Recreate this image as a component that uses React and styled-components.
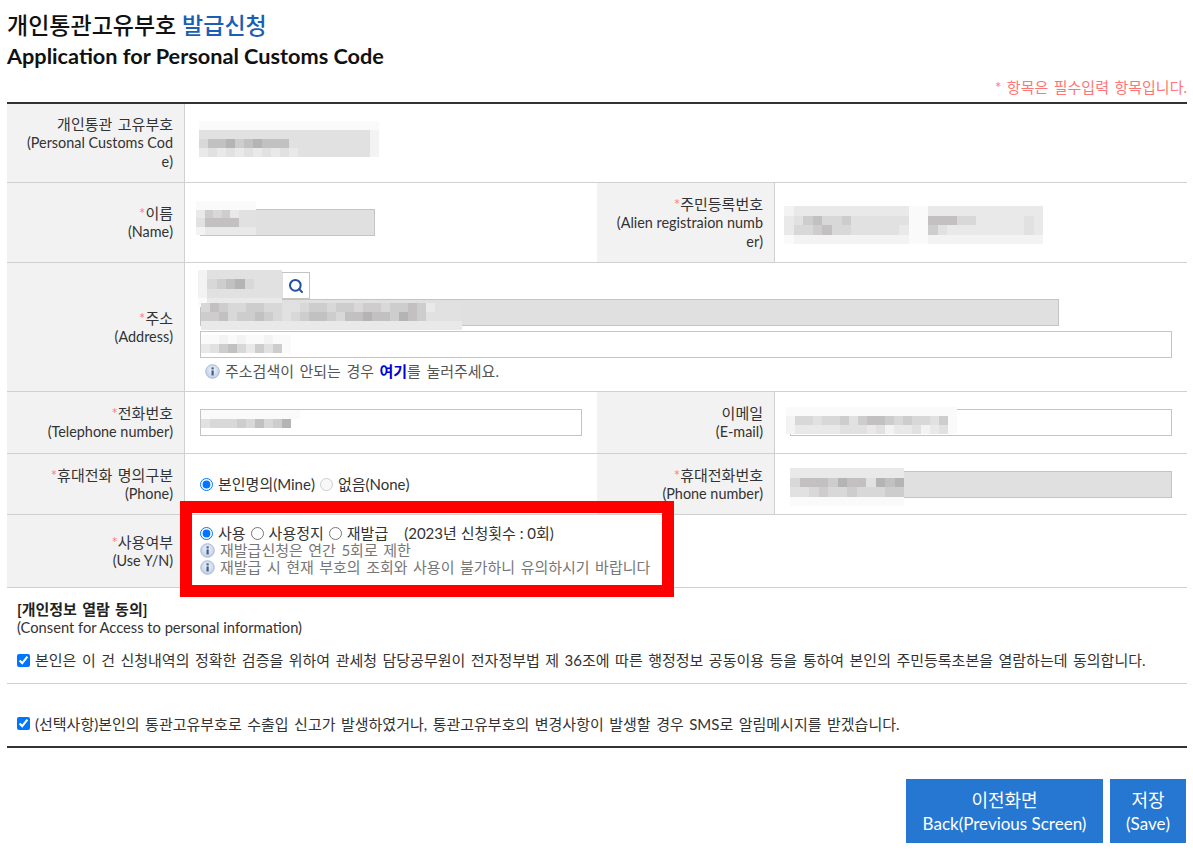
import React from "react";
import styled, { createGlobalStyle } from "styled-components";
import { Search } from "lucide-react";

const GlobalStyle = createGlobalStyle`
  html, body {
    margin: 0;
    padding: 0;
    background: #fff;
  }
  body {
    font-family: Lato, "Noto Sans CJK KR", sans-serif;
    font-size: 15px;
    line-height: 18px;
    word-spacing: 1.65px;
    color: #222;
  }
`;

const Page = styled.div`
  width: 1180px;
  margin-left: 7px;
  position: relative;
`;

const Title = styled.h1`
  margin: 0;
  padding-top: 10px;
  font-size: 23px;
  line-height: 30px;
  font-weight: 500;
  word-spacing: 0;
  color: #111;
`;

const TitleAccent = styled.span`
  color: #1a5fb4;
`;

const TitleEnglish = styled.span`
  font-size: 21.7px;
  font-weight: 700;
`;

const Required = styled.div`
  height: 31px;
  padding-top: 1px;
  box-sizing: border-box;
  text-align: right;
  line-height: 30px;
  color: #ff7575;
`;

const Table = styled.table`
  width: 1180px;
  table-layout: fixed;
  border-collapse: separate;
  border-spacing: 0;
  border-top: 2px solid #333;
`;

const Row = styled.tr`
  height: ${props => props.$height}px;
`;

const Head = styled.th`
  width: 177px;
  box-sizing: border-box;
  padding: 0 11px 0 0;
  background: #f2f2f2;
  border-right: 1px solid #d0d0d0;
  border-bottom: 1px solid #d0d0d0;
  text-align: right;
  font-weight: 400;
  color: #333;
`;

const EnglishLine = styled.span`
  font-size: 14.4px;
  word-spacing: 0;
`;

const Cell = styled.td`
  padding: 0 15px ${props => props.$bottom || 0}px;
  border-bottom: 1px solid #d0d0d0;
  position: relative;
  vertical-align: middle;
`;

const Star = styled.span`
  color: #ff7f7f;
`;

const Field = styled.div`
  display: block;
  height: 27px;
  width: ${props => props.$width || 382}px;
  box-sizing: border-box;
  border: 1px solid #c4c4c4;
  background: ${props => (props.$readOnly ? "#e0e0e0" : "#fff")};
`;

const SearchBox = styled(Field)`
  display: flex;
  justify-content: flex-end;
  background: #e0e0e0;
`;

const SearchButton = styled.button`
  width: 26px;
  padding: 0;
  border: 0;
  background: #fff;
  color: #22519f;
  display: flex;
  align-items: center;
  justify-content: center;
`;

const AddressStack = styled.div`
  display: flex;
  flex-direction: column;
  padding-bottom: 2px;
`;

const DetailField = styled(Field)`
  margin-top: 5px;
`;

const Hint = styled.div`
  margin-top: 4px;
  margin-left: 5px;
  height: 18px;
  display: flex;
  align-items: center;
  gap: 5px;
  color: #555;
`;

const HereLink = styled.a`
  color: #0000d8;
  font-weight: 700;
`;

const Choices = styled.div`
  display: flex;
  align-items: center;
  height: 17px;
  color: #333;
`;

const Radio = styled.input.attrs({ type: "radio" })`
  width: 13px;
  height: 13px;
  margin: 0 5px 0 0;
  flex-shrink: 0;
`;

const ChoiceText = styled.span`
  margin-right: ${props => props.$gap ?? 5}px;
`;

const IssueCount = styled.span`
  word-spacing: 0;
`;

const Note = styled.div`
  display: flex;
  align-items: center;
  gap: 5px;
  height: 17px;
  color: #777;
`;

const Overlay = styled.div`
  position: absolute;
  left: 173px;
  top: 501px;
  width: 494px;
  height: 96px;
  box-sizing: border-box;
  border: 12px solid #f00;
  pointer-events: none;
`;

const Patch = styled.svg`
  position: absolute;
  left: ${props => props.$left}px;
  top: ${props => props.$top}px;
  display: block;
`;

const Consent = styled.section`
  padding-top: 12px;
`;

const ConsentTitle = styled.div`
  padding-left: 10px;
  font-weight: 700;
  color: #222;
`;

const ConsentSub = styled.div`
  padding-left: 10px;
  font-size: 14.7px;
  word-spacing: 0;
  color: #333;
`;

const Agree = styled.label`
  display: flex;
  align-items: center;
  height: ${props => props.$height}px;
  padding: ${props => props.$padding};
  box-sizing: border-box;
  border-bottom: ${props => props.$border};
  color: #333;
`;

const Check = styled.input.attrs({ type: "checkbox" })`
  width: 13px;
  height: 13px;
  margin: 0 5px 0 0;
  flex-shrink: 0;
`;

const Buttons = styled.div`
  display: flex;
  justify-content: flex-end;
  gap: 7px;
  padding: 31px 1px 0 0;
`;

const Button = styled.button`
  width: ${props => props.$width}px;
  height: 64px;
  padding: 2px 0 0;
  border: 0;
  background: #2577d1;
  color: #fff;
  font: inherit;
  font-size: 18px;
  line-height: 23px;
  word-spacing: 0;
`;

const ButtonEnglish = styled.span`
  font-size: 17px;
`;

const shades = {
  a: "#fafafa",
  b: "#f3f3f3",
  c: "#e9e9e9",
  d: "#e1e1e1",
  e: "#d8d8d8",
  f: "#cdcdcd",
  g: "#c2c0c0",
  h: "#b4b4b4",
  w: "#ffffff"
};

// blurred-out personal data, one letter per mosaic block
const Mosaic = ({ left, top, rows, cell = 9 }) => (
  <Patch
    $left={left}
    $top={top}
    width={rows[0].length * cell}
    height={rows.length * cell}
    shapeRendering="crispEdges"
  >
    {rows.map((row, y) =>
      row
        .split("")
        .map((c, x) => (
          <rect
            key={`${x}-${y}`}
            x={x * cell}
            y={y * cell}
            width={cell}
            height={cell}
            fill={shades[c]}
          />
        ))
    )}
  </Patch>
);

const InfoIcon = () => (
  <svg width="15" height="15" viewBox="0 0 15 15">
    <defs>
      <radialGradient id="infoFill" cx="50%" cy="40%" r="60%">
        <stop offset="0%" stopColor="#f0f4fb" />
        <stop offset="100%" stopColor="#bccde8" />
      </radialGradient>
    </defs>
    <circle cx="7.5" cy="7.5" r="6.8" fill="url(#infoFill)" stroke="#a9bbd8" />
    <rect x="6.5" y="3.4" width="2.2" height="2" fill="#4a5a78" />
    <rect x="6.5" y="6.4" width="2.2" height="5" fill="#4a5a78" />
  </svg>
);

const Label = ({ required, ko, en }) => (
  <Head>
    {required && <Star>*</Star>}
    {ko}
    {en.map(line => (
      <React.Fragment key={line}>
        <br />
        <EnglishLine>{line}</EnglishLine>
      </React.Fragment>
    ))}
  </Head>
);

const App = () => (
  <>
    <GlobalStyle />
    <Page>
      <Title>
        개인통관고유부호 <TitleAccent>발급신청</TitleAccent>
        <br />
        <TitleEnglish>Application for Personal Customs Code</TitleEnglish>
      </Title>
      <Required>* 항목은 필수입력 항목입니다.</Required>
      <Table>
        <colgroup>
          <col width="178" />
          <col width="412" />
          <col width="178" />
          <col width="412" />
        </colgroup>
        <tbody>
          <Row $height={79}>
            <Label ko="개인통관 고유부호" en={["(Personal Customs Cod", "e)"]} />
            <Cell colSpan={3}>
              <Mosaic
                left={14}
                top={17}
                rows={[
                  "aaaaaaaaaaaaaaaaaaaa",
                  "dddddddddddddddddddb",
                  "egghfghgggdddddddddb",
                  "cdcdcdcdcdcddddddddb"
                ]}
              />
            </Cell>
          </Row>
          <Row $height={80}>
            <Label required ko="이름" en={["(Name)"]} />
            <Cell>
              <Field $readOnly $width={175} />
              <Mosaic
                left={11}
                top={18}
                rows={["aaaaaaa", "cfefcdd", "dggggdd", "bcccccc"]}
                cell={8.6}
              />
            </Cell>
            <Label required ko="주민등록번호" en={["(Alien registraion numb", "er)"]} />
            <Cell>
              <Mosaic
                left={9}
                top={23}
                rows={[
                  "bccccccccccccaacccccccccccc",
                  "cdfgeefddddddaagggeecccccdc",
                  "ceefgeedddddcaafdccccccccdc",
                  "abbbbbbbbbbbbaabbbbbbbbbbbb"
                ]}
                cell={9.6}
              />
            </Cell>
          </Row>
          <Row $height={129}>
            <Label required ko="주소" en={["(Address)"]} />
            <Cell colSpan={3}>
              <AddressStack>
                <SearchBox $width={110}>
                  <SearchButton>
                    <Search size={16} strokeWidth={3} />
                  </SearchButton>
                </SearchBox>
                <Field $readOnly $width={859} />
                <DetailField $width={972} />
                <Hint>
                  <InfoIcon />
                  <span>
                    주소검색이 안되는 경우 <HereLink>여기</HereLink>를 눌러주세요.
                  </span>
                </Hint>
              </AddressStack>
              <Mosaic
                left={13}
                top={7}
                rows={["bdddddddd", "befgheddd", "bdddddddd", "acccccccc"]}
                cell={9.3}
              />
              <Mosaic
                left={16}
                top={40}
                rows={[
                  "egfeeffeeddeffeffeffeffgfcddd",
                  "ffgeffgfedefggfegghggfhgfdddd",
                  "ccccccccccccccccccccccccccccc"
                ]}
              />
              <Mosaic left={16} top={72} rows={["aababaabaa", "cdfgecfdfa"]} />
            </Cell>
          </Row>
          <Row $height={62}>
            <Label required ko="전화번호" en={["(Telephone number)"]} />
            <Cell>
              <Field />
              <Mosaic left={16} top={18} rows={["aaaaaaaaaaa", "deeefegefhw"]} />
            </Cell>
            <Label ko="이메일" en={["(E-mail)"]} />
            <Cell>
              <Field />
              <Mosaic
                left={11}
                top={15}
                rows={[
                  "aaaaaaaaaaaaaaaaaaa",
                  "beedeefdfggfefeedfa",
                  "bcccccdddcdbccdbcda"
                ]}
              />
            </Cell>
          </Row>
          <Row $height={61}>
            <Label required ko="휴대전화 명의구분" en={["(Phone)"]} />
            <Cell>
              <Choices>
                <Radio name="owner" defaultChecked />
                <ChoiceText>본인명의(Mine)</ChoiceText>
                <Radio name="owner" disabled />
                <ChoiceText>없음(None)</ChoiceText>
              </Choices>
            </Cell>
            <Label required ko="휴대전화번호" en={["(Phone number)"]} />
            <Cell>
              <Field $readOnly />
              <Mosaic
                left={15}
                top={14}
                rows={["cccccccccccc", "egggfhggdhgh", "ddefeefeeeff", "aaaaaaaaaaaa"]}
                cell={9.5}
              />
            </Cell>
          </Row>
          <Row $height={73}>
            <Label required ko="사용여부" en={["(Use Y/N)"]} />
            <Cell colSpan={3} $bottom={2}>
              <Choices>
                <Radio name="use" defaultChecked />
                <ChoiceText>사용</ChoiceText>
                <Radio name="use" />
                <ChoiceText>사용정지</ChoiceText>
                <Radio name="use" />
                <ChoiceText $gap={16}>재발급</ChoiceText>
                <IssueCount>(2023년 신청횟수 : 0회)</IssueCount>
              </Choices>
              <Note>
                <InfoIcon />
                재발급신청은 연간 5회로 제한
              </Note>
              <Note>
                <InfoIcon />
                재발급 시 현재 부호의 조회와 사용이 불가하니 유의하시기 바랍니다
              </Note>
            </Cell>
          </Row>
        </tbody>
      </Table>
      <Overlay />
      <Consent>
        <ConsentTitle>[개인정보 열람 동의]</ConsentTitle>
        <ConsentSub>(Consent for Access to personal information)</ConsentSub>
        <Agree $height={48} $padding="1px 0 0 10px" $border="1px solid #d0d0d0">
          <Check defaultChecked />
          본인은 이 건 신청내역의 정확한 검증을 위하여 관세청 담당공무원이 전자정부법 제 36조에 따른 행정정보 공동이용 등을 통하여 본인의 주민등록초본을 열람하는데 동의합니다.
        </Agree>
        <Agree $height={64} $padding="17px 0 0 10px" $border="2px solid #333">
          <Check defaultChecked />
          (선택사항)본인의 통관고유부호로 수출입 신고가 발생하였거나, 통관고유부호의 변경사항이 발생할 경우 SMS로 알림메시지를 받겠습니다.
        </Agree>
      </Consent>
      <Buttons>
        <Button $width={197}>
          이전화면
          <br />
          <ButtonEnglish>Back(Previous Screen)</ButtonEnglish>
        </Button>
        <Button $width={76}>
          저장
          <br />
          <ButtonEnglish>(Save)</ButtonEnglish>
        </Button>
      </Buttons>
    </Page>
  </>
);

export default App;
